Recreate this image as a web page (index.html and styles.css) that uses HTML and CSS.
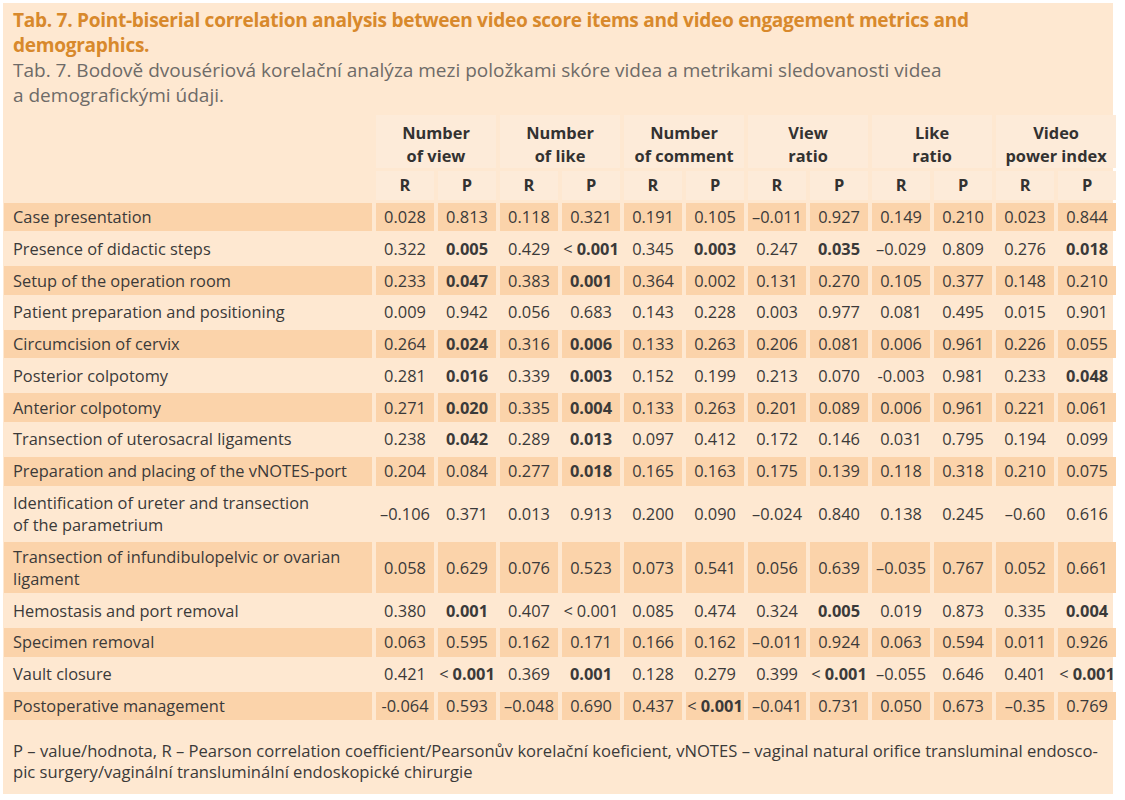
FILE: index.html
```html
<!DOCTYPE html>
<html lang="cs">
<head>
<meta charset="utf-8">
<title>Tab. 7</title>
<link rel="stylesheet" href="styles.css">
</head>
<body>
<div class="panel">
  <h1 class="title">Tab. 7. Point-biserial correlation analysis between video score items and video engagement metrics and<br>demographics.</h1>
  <p class="subtitle">Tab. 7. Bodově dvousériová korelační analýza mezi položkami skóre videa a metrikami sledovanosti videa<br>a demografickými údaji.</p>
  <table class="data">
    <colgroup>
      <col class="c-label">
      <col class="c-num"><col class="c-num"><col class="c-num"><col class="c-num"><col class="c-num"><col class="c-num">
      <col class="c-num"><col class="c-num"><col class="c-num"><col class="c-num"><col class="c-num"><col class="c-num">
    </colgroup>
    <thead>
      <tr class="grp">
        <th class="blank"></th>
        <th colspan="2">Number<br>of view</th>
        <th colspan="2">Number<br>of like</th>
        <th colspan="2">Number<br>of comment</th>
        <th colspan="2">View<br>ratio</th>
        <th colspan="2">Like<br>ratio</th>
        <th colspan="2">Video<br>power index</th>
      </tr>
      <tr class="rp">
        <th class="blank"></th>
        <th>R</th><th>P</th><th>R</th><th>P</th><th>R</th><th>P</th>
        <th>R</th><th>P</th><th>R</th><th>P</th><th>R</th><th>P</th>
      </tr>
    </thead>
    <tbody>
      <tr class="odd"><td>Case presentation</td><td>0.028</td><td>0.813</td><td>0.118</td><td>0.321</td><td>0.191</td><td>0.105</td><td>–0.011</td><td>0.927</td><td>0.149</td><td>0.210</td><td>0.023</td><td>0.844</td></tr>
      <tr><td>Presence of didactic steps</td><td>0.322</td><td><b>0.005</b></td><td>0.429</td><td><span class="lt">&lt;</span><b>0.001</b></td><td>0.345</td><td><b>0.003</b></td><td>0.247</td><td><b>0.035</b></td><td>–0.029</td><td>0.809</td><td>0.276</td><td><b>0.018</b></td></tr>
      <tr class="odd"><td>Setup of the operation room</td><td>0.233</td><td><b>0.047</b></td><td>0.383</td><td><b>0.001</b></td><td>0.364</td><td>0.002</td><td>0.131</td><td>0.270</td><td>0.105</td><td>0.377</td><td>0.148</td><td>0.210</td></tr>
      <tr><td>Patient preparation and positioning</td><td>0.009</td><td>0.942</td><td>0.056</td><td>0.683</td><td>0.143</td><td>0.228</td><td>0.003</td><td>0.977</td><td>0.081</td><td>0.495</td><td>0.015</td><td>0.901</td></tr>
      <tr class="odd"><td>Circumcision of cervix</td><td>0.264</td><td><b>0.024</b></td><td>0.316</td><td><b>0.006</b></td><td>0.133</td><td>0.263</td><td>0.206</td><td>0.081</td><td>0.006</td><td>0.961</td><td>0.226</td><td>0.055</td></tr>
      <tr><td>Posterior colpotomy</td><td>0.281</td><td><b>0.016</b></td><td>0.339</td><td><b>0.003</b></td><td>0.152</td><td>0.199</td><td>0.213</td><td>0.070</td><td>-0.003</td><td>0.981</td><td>0.233</td><td><b>0.048</b></td></tr>
      <tr class="odd"><td>Anterior colpotomy</td><td>0.271</td><td><b>0.020</b></td><td>0.335</td><td><b>0.004</b></td><td>0.133</td><td>0.263</td><td>0.201</td><td>0.089</td><td>0.006</td><td>0.961</td><td>0.221</td><td>0.061</td></tr>
      <tr><td>Transection of uterosacral ligaments</td><td>0.238</td><td><b>0.042</b></td><td>0.289</td><td><b>0.013</b></td><td>0.097</td><td>0.412</td><td>0.172</td><td>0.146</td><td>0.031</td><td>0.795</td><td>0.194</td><td>0.099</td></tr>
      <tr class="odd"><td>Preparation and placing of the vNOTES-port</td><td>0.204</td><td>0.084</td><td>0.277</td><td><b>0.018</b></td><td>0.165</td><td>0.163</td><td>0.175</td><td>0.139</td><td>0.118</td><td>0.318</td><td>0.210</td><td>0.075</td></tr>
      <tr><td>Identification of ureter and transection<br>of the parametrium</td><td>–0.106</td><td>0.371</td><td>0.013</td><td>0.913</td><td>0.200</td><td>0.090</td><td>–0.024</td><td>0.840</td><td>0.138</td><td>0.245</td><td>–0.60</td><td>0.616</td></tr>
      <tr class="odd"><td>Transection of infundibulopelvic or ovarian<br>ligament</td><td>0.058</td><td>0.629</td><td>0.076</td><td>0.523</td><td>0.073</td><td>0.541</td><td>0.056</td><td>0.639</td><td>–0.035</td><td>0.767</td><td>0.052</td><td>0.661</td></tr>
      <tr><td>Hemostasis and port removal</td><td>0.380</td><td><b>0.001</b></td><td>0.407</td><td><span class="lt">&lt;</span>0.001</td><td>0.085</td><td>0.474</td><td>0.324</td><td><b>0.005</b></td><td>0.019</td><td>0.873</td><td>0.335</td><td><b>0.004</b></td></tr>
      <tr class="odd"><td>Specimen removal</td><td>0.063</td><td>0.595</td><td>0.162</td><td>0.171</td><td>0.166</td><td>0.162</td><td>–0.011</td><td>0.924</td><td>0.063</td><td>0.594</td><td>0.011</td><td>0.926</td></tr>
      <tr><td>Vault closure</td><td>0.421</td><td><span class="lt">&lt;</span><b>0.001</b></td><td>0.369</td><td><b>0.001</b></td><td>0.128</td><td>0.279</td><td>0.399</td><td><span class="lt">&lt;</span><b>0.001</b></td><td>–0.055</td><td>0.646</td><td>0.401</td><td><span class="lt">&lt;</span><b>0.001</b></td></tr>
      <tr class="odd"><td>Postoperative management</td><td>-0.064</td><td>0.593</td><td>–0.048</td><td>0.690</td><td>0.437</td><td><span class="lt">&lt;</span><b>0.001</b></td><td>–0.041</td><td>0.731</td><td>0.050</td><td>0.673</td><td>–0.35</td><td>0.769</td></tr>
    </tbody>
  </table>
  <p class="note">P – value/hodnota, R – Pearson correlation coefficient/Pearsonův korelační koeficient, vNOTES – vaginal natural orifice transluminal endosco-<br>pic surgery/vaginální transluminální endoskopické chirurgie</p>
</div>
</body>
</html>
```

FILE: styles.css
```css
html, body {
  margin: 0;
  padding: 0;
  background: #ffffff;
}

body {
  font-family: "Open Sans", "Noto Sans", "Liberation Sans", sans-serif;
  color: #3b3a39;
}

.panel {
  margin: 3px 0 0 3px;
  width: 1110px;
  height: 791px;
  background: #fee8d1;
  padding: 5px 0 0 0;
  box-sizing: border-box;
}

.title {
  margin: 0;
  padding: 0 0 0 10px;
  font-size: 19.1px;
  line-height: 25px;
  font-weight: 700;
  color: #d8892c;
  letter-spacing: -0.3px;
}

.subtitle {
  margin: 0;
  padding: 0 0 0 10px;
  font-size: 19px;
  line-height: 25px;
  font-weight: 400;
  color: #6e6b68;
  letter-spacing: 0;
}

.data {
  margin: 4px 0 0 -3px;
  width: 1116px;
  border-collapse: separate;
  border-spacing: 4px 3px;
  table-layout: fixed;
  font-size: 16.4px;
  line-height: 22px;
}

.c-label { width: 368px; }
.c-num { width: 58px; }

.data th,
.data td {
  padding: 3.4px 0;
  text-align: center;
  white-space: nowrap;
}

.data th {
  font-weight: 700;
  color: #333231;
  background: #fdebd9;
}

.data th.blank {
  background: transparent;
}

.grp th {
  line-height: 23px;
  padding: 6.4px 0 0.4px;
}

.data td:first-child {
  text-align: left;
  padding-left: 9px;
}

.data tr.odd td {
  background: #fbd3aa;
}

.data b {
  font-weight: 700;
}

.lt {
  font-weight: 400;
  margin-right: 4px;
}

.note {
  margin: 17px 0 0 0;
  padding: 0 0 0 10px;
  font-size: 16.6px;
  line-height: 21px;
  color: #3b3a39;
  letter-spacing: 0;
}
```
